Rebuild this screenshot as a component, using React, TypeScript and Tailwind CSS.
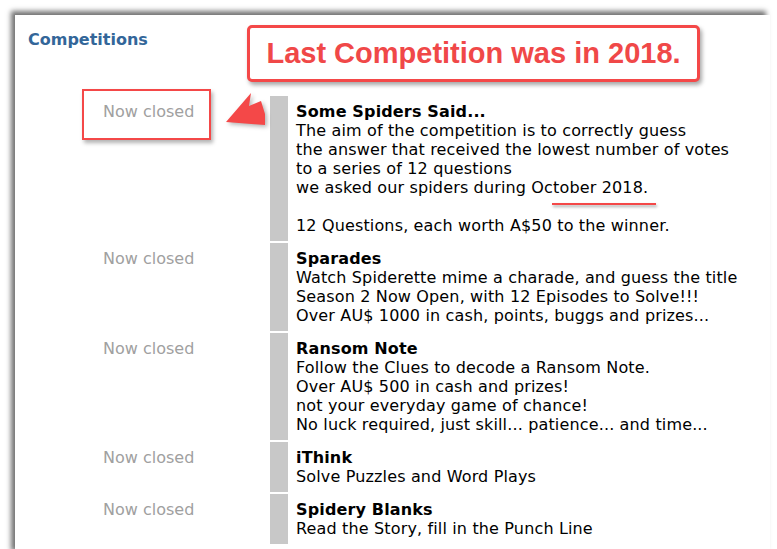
const rows = [
  {
    title: "Some Spiders Said...",
    lines: [
      "The aim of the competition is to correctly guess",
      "the answer that received the lowest number of votes",
      "to a series of 12 questions",
      "we asked our spiders during October 2018.",
      "",
      "12 Questions, each worth A$50 to the winner.",
    ],
  },
  {
    title: "Sparades",
    lines: [
      "Watch Spiderette mime a charade, and guess the title",
      "Season 2 Now Open, with 12 Episodes to Solve!!!",
      "Over AU$ 1000 in cash, points, buggs and prizes...",
    ],
  },
  {
    title: "Ransom Note",
    lines: [
      "Follow the Clues to decode a Ransom Note.",
      "Over AU$ 500 in cash and prizes!",
      "not your everyday game of chance!",
      "No luck required, just skill... patience... and time...",
    ],
  },
  { title: "iThink", lines: ["Solve Puzzles and Word Plays"] },
  { title: "Spidery Blanks", lines: ["Read the Story, fill in the Punch Line"] },
];

export default function App() {
  return (
    <div className="relative h-[549px] w-[777px] overflow-hidden bg-white">
      {/* screenshot panel */}
      <div
        className="ml-[15px] mt-[15px] h-[540px] w-[755px] bg-white pt-[15px] shadow-[-4px_-4px_5px_rgba(0,0,0,0.55)]"
        style={{ fontFamily: '"DejaVu Sans", Verdana, sans-serif' }}
      >
        <h2 className="pl-[13px] text-[16px] font-bold leading-[19px] text-[#336699]">
          Competitions
        </h2>
        <div className="mt-[47px] grid grid-cols-[255px_18px_1fr] gap-y-[2px] text-[16px] leading-[19px] text-black">
          {rows.map((r) => (
            <div key={r.title} className="contents">
              <div className="pl-[88px] pt-[6px] text-[#a0a0a0]">Now closed</div>
              <div className="bg-[#c8c8c8]" />
              <div className="pb-[6px] pl-[8px] pt-[6px] tracking-[0.15px]">
                <div className="font-bold">{r.title}</div>
                {r.lines.map((l, i) => (
                  <div key={i} className="h-[19px] whitespace-nowrap">
                    {l}
                  </div>
                ))}
              </div>
            </div>
          ))}
        </div>
      </div>

      {/* annotations */}
      <div
        className="absolute left-[247px] top-[25px] flex h-[57px] w-[453px] items-center justify-center rounded-[5px] border-[3px] border-[#f44848] bg-white shadow-[2px_3px_4px_rgba(0,0,0,0.35)]"
        style={{ fontFamily: '"Liberation Sans", Arial, sans-serif' }}
      >
        <span className="text-[29px] font-bold text-[#f04848]">Last Competition was in 2018.</span>
      </div>
      <div className="absolute left-[82px] top-[89px] h-[51px] w-[129px] border-[2px] border-[#f44848] shadow-[2px_3px_4px_rgba(0,0,0,0.3)]" />
      <svg className="absolute left-[220px] top-[88px]" width="52" height="44" viewBox="0 0 52 44">
        <polygon
          points="6,34 31,5 29,18 41,13 45,26 45,37"
          fill="#f44848"
          style={{ filter: "drop-shadow(2px 2px 2px rgba(0,0,0,0.3))" }}
        />
      </svg>
      <div className="absolute left-[552px] top-[203px] h-[2px] w-[104px] bg-[#f44848] shadow-[1px_2px_3px_rgba(0,0,0,0.35)]" />
    </div>
  );
}
